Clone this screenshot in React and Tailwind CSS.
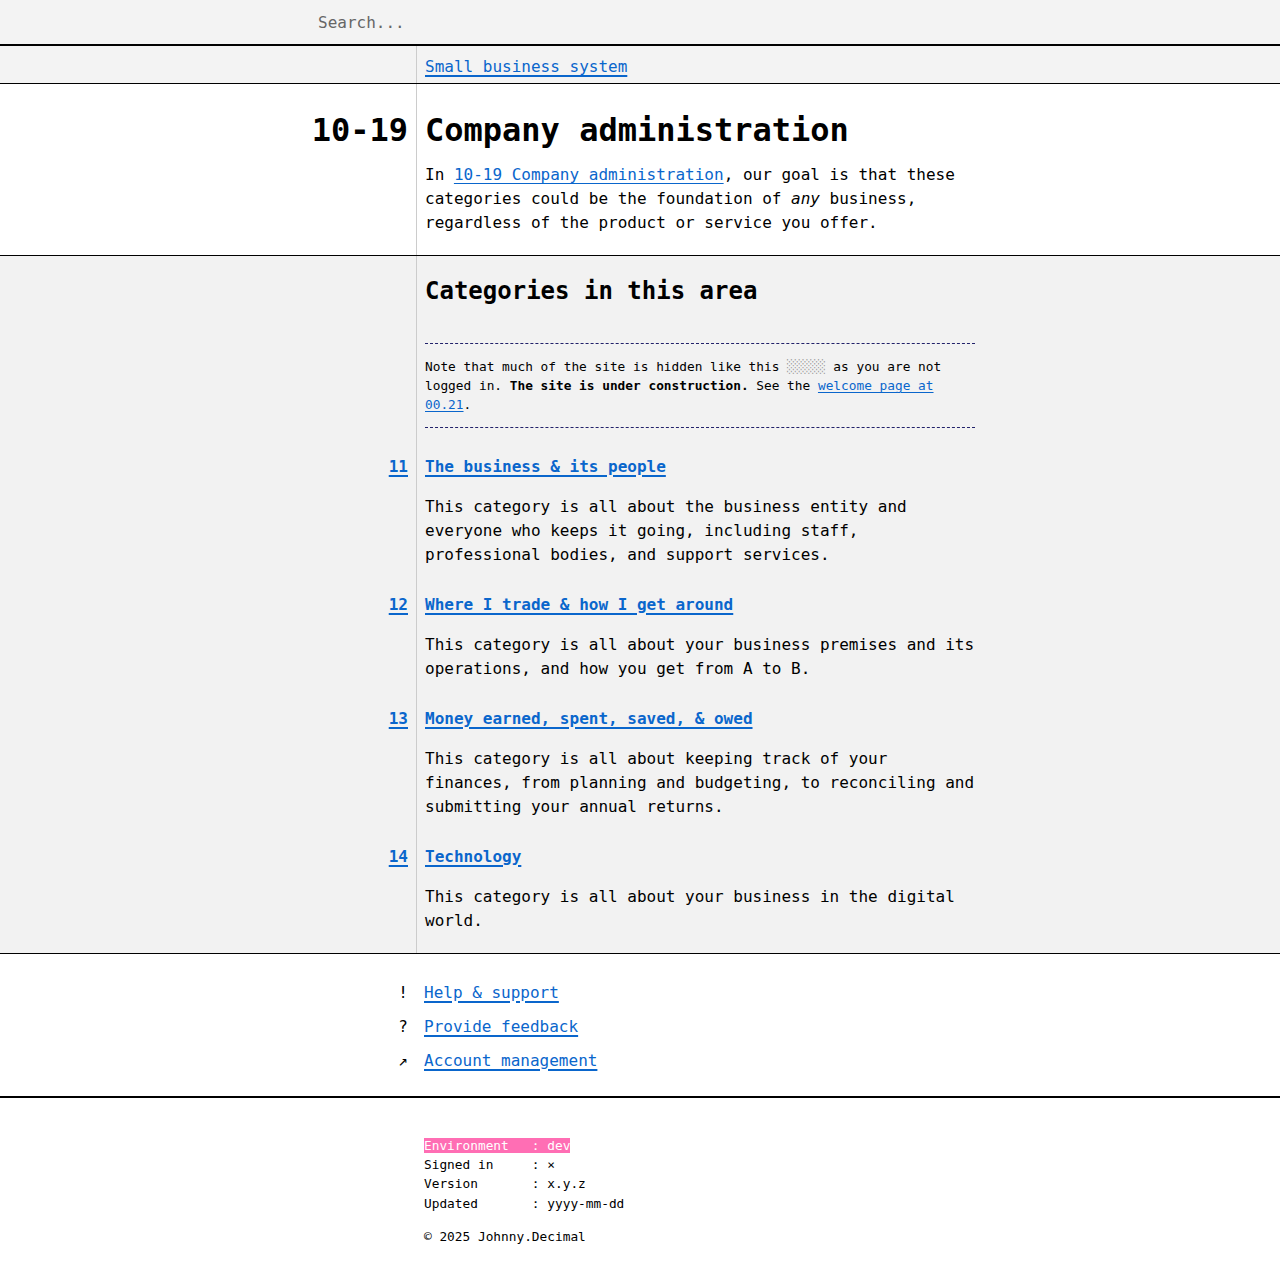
const mono = "font-['DejaVu_Sans_Mono','Liberation_Mono',monospace]";

const link = 'text-[#0a66cc] underline decoration-2 underline-offset-[3px]';

function Row({ left, children, pad = '' }) {
    return (
        <div className="flex">
            <div className={`w-[417px] shrink-0 border-r border-[#cccccc] pr-2 text-right ${pad}`}>{left}</div>
            <div className={`pl-2 ${pad}`}>{children}</div>
        </div>
    );
}

const categories = [
    {
        id: '11',
        title: 'The business & its people',
        text: 'This category is all about the business entity and everyone who keeps it going, including staff, professional bodies, and support services.',
    },
    {
        id: '12',
        title: 'Where I trade & how I get around',
        text: 'This category is all about your business premises and its operations, and how you get from A to B.',
    },
    {
        id: '13',
        title: 'Money earned, spent, saved, & owed',
        text: 'This category is all about keeping track of your finances, from planning and budgeting, to reconciling and submitting your annual returns.',
    },
    {
        id: '14',
        title: 'Technology',
        text: 'This category is all about your business in the digital world.',
    },
];

export default function App() {
    return (
        <div className={`${mono} min-h-screen bg-white text-[16px] leading-6 text-black`}>
            {/* Search bar */}
            <div className="h-[46px] bg-[#f3f3f3] border-b-2 border-black">
                <input
                    type="text"
                    placeholder="Search..."
                    className="ml-[310px] h-[44px] w-[600px] bg-transparent px-2 text-[16px] outline-none placeholder:text-[#666666]"
                />
            </div>

            {/* Breadcrumb */}
            <div className="bg-[#f3f3f3] border-b border-black">
                <Row pad="h-[37px] pt-[9px]">
                    <a href="#" className={link}>Small business system</a>
                </Row>
            </div>

            {/* Area header */}
            <div className="bg-white border-b border-black">
                <Row pad="pt-[26px] pb-[20px]" left={<h1 className="text-[32px] font-bold leading-10">10-19</h1>}>
                    <h1 className="text-[32px] font-bold leading-10">Company administration</h1>
                    <p className="mt-[13px] w-[550px]">
                        In <a href="#" className="text-[#0a66cc] underline underline-offset-[3px]">10-19 Company administration</a>, our goal
                        is that these categories could be the foundation of <em>any</em> business, regardless of the product or service you offer.
                    </p>
                </Row>
            </div>

            {/* Categories */}
            <div className="bg-[#f2f2f2] border-b border-black">
                <Row pad="pt-[19px]">
                    <h2 className="text-[24px] font-bold leading-8">Categories in this area</h2>
                </Row>
                <Row pad="pt-[36px]">
                    <div className="w-[550px] border-y border-dashed border-[#22226a] pt-[13px] pb-[12px] text-[12.8px] leading-[19.2px]">
                        Note that much of the site is hidden like this <span className="text-[#9a9a9a]">░░░░░</span> as you are not
                        logged in. <strong>The site is under construction.</strong> See the{' '}
                        <a href="#" className="text-[#0a66cc] underline underline-offset-2">welcome page at 00.21</a>.
                    </div>
                </Row>
                {categories.map((c, i) => (
                    <Row
                        key={c.id}
                        pad={i === 0 ? 'pt-[27px]' : i === categories.length - 1 ? 'pt-[26px] pb-[20px]' : 'pt-[26px]'}
                        left={<a href="#" className={`${link} font-bold`}>{c.id}</a>}
                    >
                        <a href="#" className={`${link} font-bold`}>{c.title}</a>
                        <p className="mt-4 w-[550px]">{c.text}</p>
                    </Row>
                ))}
            </div>

            {/* Footer links */}
            <div className="border-b-2 border-black pt-[27px] pb-[23px]">
                <div className="flex flex-col gap-[10px]">
                    {[
                        ['!', 'Help & support'],
                        ['?', 'Provide feedback'],
                        ['↗', 'Account management'],
                    ].map(([mark, label]) => (
                        <div key={label} className="flex">
                            <div className="w-[416px] shrink-0 pr-2 text-right">{mark}</div>
                            <div className="pl-2">
                                <a href="#" className="text-[#0a66cc] underline decoration-2 underline-offset-[3px]">{label}</a>
                            </div>
                        </div>
                    ))}
                </div>
            </div>

            {/* Build info */}
            <div className="pl-[424px] pt-[38px] pb-10 text-[12.8px] leading-[19.4px] whitespace-pre">
                <div>
                    <span className="bg-[#ff6eb4] text-white">Environment   : dev</span>
                </div>
                <div>Signed in     : ×</div>
                <div>Version       : x.y.z</div>
                <div>Updated       : yyyy-mm-dd</div>
                <div className="mt-[14px]">© 2025 Johnny.Decimal</div>
            </div>
        </div>
    );
}
